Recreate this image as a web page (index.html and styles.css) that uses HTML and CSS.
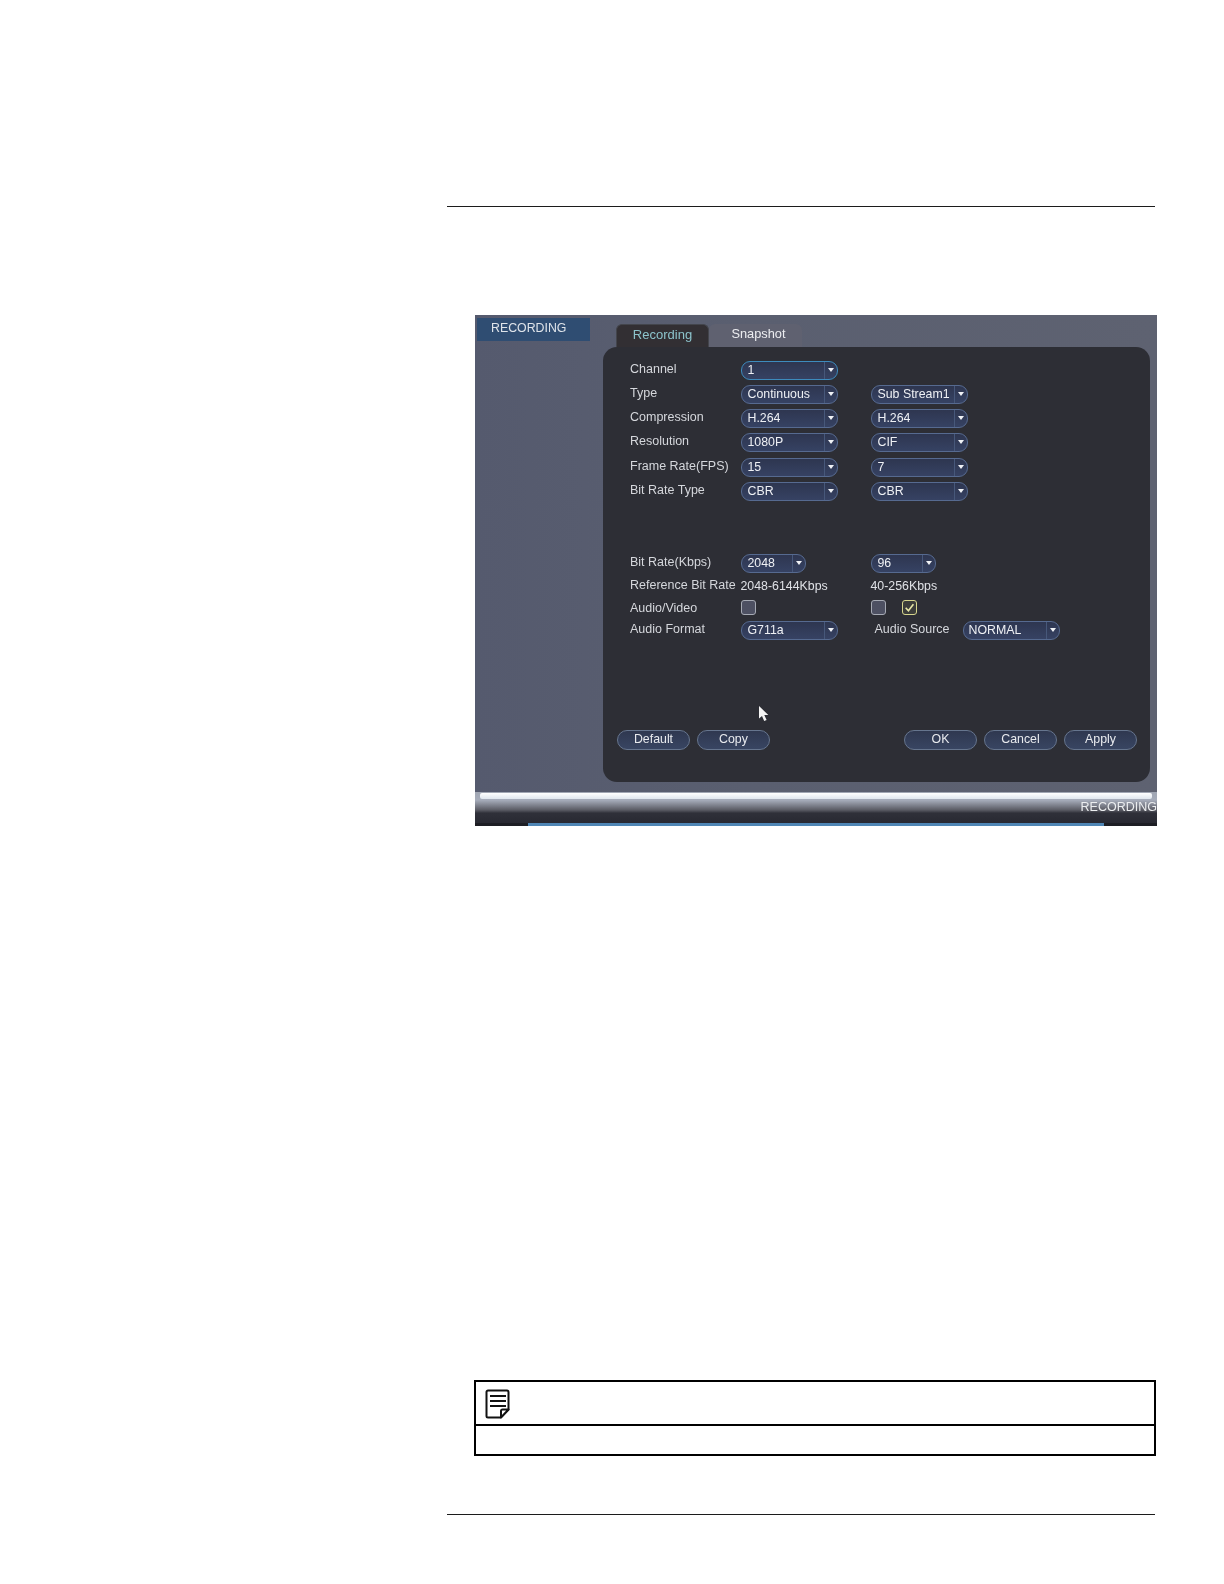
FILE: index.html
```html
<!DOCTYPE html>
<html lang="en">
<head>
<meta charset="utf-8">
<title>Recording settings</title>
<link rel="stylesheet" href="styles.css">
</head>
<body>
<main class="page">
  <hr class="rule">
  <section class="shot">
    <div class="shot-main">
      <aside class="side"><div class="side-tab">RECORDING</div></aside>
      <div class="content">
        <nav class="tabs">
          <div class="tab tab-active">Recording</div>
          <div class="tab tab-idle">Snapshot</div>
        </nav>
        <div class="panel">
          <div class="row">
            <span class="label">Channel</span>
            <div class="sel sel-focus"><span class="val">1</span><span class="drop"></span></div>
          </div>
          <div class="row">
            <span class="label">Type</span>
            <div class="sel"><span class="val">Continuous</span><span class="drop"></span></div>
            <div class="sel"><span class="val">Sub Stream1</span><span class="drop"></span></div>
          </div>
          <div class="row">
            <span class="label">Compression</span>
            <div class="sel"><span class="val">H.264</span><span class="drop"></span></div>
            <div class="sel"><span class="val">H.264</span><span class="drop"></span></div>
          </div>
          <div class="row">
            <span class="label">Resolution</span>
            <div class="sel"><span class="val">1080P</span><span class="drop"></span></div>
            <div class="sel"><span class="val">CIF</span><span class="drop"></span></div>
          </div>
          <div class="row">
            <span class="label">Frame Rate(FPS)</span>
            <div class="sel"><span class="val">15</span><span class="drop"></span></div>
            <div class="sel"><span class="val">7</span><span class="drop"></span></div>
          </div>
          <div class="row">
            <span class="label">Bit Rate Type</span>
            <div class="sel"><span class="val">CBR</span><span class="drop"></span></div>
            <div class="sel"><span class="val">CBR</span><span class="drop"></span></div>
          </div>
          <div class="row row-gap"></div>
          <div class="row row-tight">
            <span class="label">Bit Rate(Kbps)</span>
            <div class="sel sel-short"><span class="val">2048</span><span class="drop"></span></div>
            <div class="sel sel-short"><span class="val">96</span><span class="drop"></span></div>
          </div>
          <div class="row row-tight">
            <span class="label label-center">Reference Bit Rate</span>
            <span class="plain">2048-6144Kbps</span>
            <span class="plain">40-256Kbps</span>
          </div>
          <div class="row row-tight">
            <span class="label">Audio/Video</span>
            <div class="box"></div>
            <div class="boxes">
              <div class="box"></div>
              <div class="box box-on">
                <svg class="tick" viewBox="0 0 12 12"><path d="M2.5 6.2 5 9l4.6-6"/></svg>
              </div>
            </div>
          </div>
          <div class="row row-tight row-audio">
            <span class="label">Audio Format</span>
            <div class="sel"><span class="val">G711a</span><span class="drop"></span></div>
            <div class="source">
              <span class="label">Audio Source</span>
              <div class="sel sel-normal"><span class="val">NORMAL</span><span class="drop"></span></div>
            </div>
          </div>
          <svg class="cursor" viewBox="0 0 10 16"><path d="M0 0v12.5l3-2.6 2.2 5.1 2.4-1-2.3-4.9h4z"/></svg>
          <div class="actions">
            <div class="btn-group">
              <div class="btn">Default</div>
              <div class="btn">Copy</div>
            </div>
            <div class="btn-group">
              <div class="btn">OK</div>
              <div class="btn">Cancel</div>
              <div class="btn">Apply</div>
            </div>
          </div>
        </div>
      </div>
    </div>
    <footer class="bar">
      <div class="bar-shine"></div>
      <div class="bar-label">RECORDING</div>
      <div class="bar-line"></div>
    </footer>
  </section>
  <section class="note">
    <div class="note-head">
      <svg class="note-icon" viewBox="0 0 26 30">
        <path class="note-sheet" d="M3 1.500h19a1.500 1.500 0 0 1 1.500 1.500v17.500l-8 8H3a1.500 1.500 0 0 1-1.500-1.500V3A1.500 1.500 0 0 1 3 1.500z"/>
        <path class="note-sheet" d="M23.500 20.500h-6a1.500 1.500 0 0 0-1.500 1.500v6.500z"/>
        <path class="note-lines" d="M5 7h16M5 12h16M5 17h16"/>
      </svg>
    </div>
    <div class="note-body"></div>
  </section>
  <hr class="rule rule-foot">
</main>
</body>
</html>
```
FILE: styles.css
```css
* { box-sizing: border-box; }
html, body { margin: 0; background: #fff; }
body { font-family: "Liberation Sans", Arial, sans-serif; }

.page { width: 1224px; height: 1584px; padding: 206px 0 0 447px; overflow: hidden; }
.rule { width: 708px; height: 1px; margin: 0; border: 0; background: #1c1c1c; }
.rule-foot { margin-top: 58px; }

.shot {
  width: 682px; height: 511px; margin: 108px 0 0 28px;
  display: flex; flex-direction: column;
  background: #585d6f; color: #e4e6ea;
  font-size: 12.35px; overflow: hidden;
  filter: blur(0.45px);
}
.shot-main { height: 477px; display: flex; background: linear-gradient(90deg, #555a6e 0%, #5a5f70 40%, #5e6271 100%); }
.side { width: 128px; padding: 3px 0 0 2px; flex: none; }
.side-tab { width: 113px; height: 23px; padding: 3px 0 0 14px; background: #2f4d72; line-height: 15px; color: #dfe4ea; }
.content { flex: 1; padding: 9px 7px 10px 0; display: flex; flex-direction: column; }
.tabs { height: 23px; padding-left: 13px; display: flex; flex: none; font-size: 12.800px; }
.tab { width: 93px; height: 23px; text-align: center; line-height: 20px; border-radius: 6px 6px 0 0; }
.tab-active { background: #322f33; color: #8cc3cb; border: 1px solid #43454c; border-bottom: 0; font-size: 13px; }
.tab-idle { padding-left: 6px; background: #5f6170; color: #ecedf0; }

.panel {
  position: relative; flex: 1; padding: 14px 13px 32px 14px;
  display: flex; flex-direction: column;
  background: #2d2e35; border-radius: 14px;
}
.row { height: 24.150px; padding-left: 13px; display: grid; grid-template-columns: 110.5px 130px 1fr; justify-items: start; align-items: start; flex: none; }
.row-gap { height: 48px; }
.row-tight { height: 22.900px; }
.row-audio { margin-top: -1.500px; }
.label { margin-top: 1px; color: #d5d7dc; font-size: 12.500px; line-height: 15px; }
.label-center { margin-top: 1.500px; }
.plain { color: #dfe1e6; line-height: 16px; margin-top: 1px; }

.sel {
  width: 97px; height: 19px; padding-left: 6px;
  display: flex; justify-content: space-between;
  background: linear-gradient(#2e3650, #364263);
  border: 1px solid #566a90; border-radius: 9px;
  color: #eef0f4; line-height: 17px;
}
.sel-short { width: 65px; }
.sel-focus { border-color: #3d8bbd; }
.sel-normal { padding-left: 5px; }
.drop { position: relative; width: 13px; flex: none; border-left: 1px solid #47587a; }
.drop::after {
  content: ""; position: absolute; left: 3px; top: 6px;
  border: 3px solid transparent; border-top: 4px solid #f0f2f6; border-bottom: 0;
}
.box { width: 15px; height: 15px; background: #4d5062; border: 1px solid #a6aab4; border-radius: 3px; }
.box-on { background: #3b3c3a; border-color: #d6d58e; display: flex; }
.boxes { display: flex; gap: 16px; }
.tick { width: 13px; height: 13px; fill: none; stroke: #e6e5a6; stroke-width: 1.500; }
.source { margin-left: 4px; display: flex; gap: 13px; }
.cursor { position: absolute; left: 156px; top: 359px; width: 10px; height: 16px; fill: #f5f5f5; }

.actions { margin-top: auto; display: flex; justify-content: space-between; }
.btn-group { display: flex; gap: 7px; }
.btn {
  width: 73px; height: 20px; text-align: center; line-height: 17px;
  background: linear-gradient(#2f3850, #384562);
  border: 1px solid #66758e; border-radius: 10px; color: #e8eaee;
}

.bar {
  position: relative; height: 34px; flex: none;
  background: linear-gradient(#a0a6b3 0%, #a6acba 24%, #5a5b64 53%, #2f3039 62%, #262730 100%);
}
.bar-shine { height: 6px; margin: 1px 5px 0 5px; background: linear-gradient(#ffffff, #dfe6ee); border-radius: 2px; }
.bar-label { margin-top: 1px; text-align: right; line-height: 15px; color: #eceef0; font-size: 12.500px; white-space: nowrap; }
.bar-line { position: absolute; left: 0; right: 0; bottom: 0; height: 3px; background: #4f86b5; border-left: 53px solid #1d1e24; border-right: 53px solid #1d1e24; }

.note { width: 682px; height: 76px; margin: 554px 0 0 27px; border: 2px solid #000; display: flex; flex-direction: column; }
.note-head { height: 44px; padding: 7px 0 0 9px; border-bottom: 2px solid #000; flex: none; }
.note-body { flex: 1; }
.note-icon { display: block; width: 26px; height: 30px; fill: none; }
.note-sheet { stroke: #111; stroke-width: 2; stroke-linejoin: round; fill: #fff; }
.note-lines { stroke: #111; stroke-width: 1.800; }
```
